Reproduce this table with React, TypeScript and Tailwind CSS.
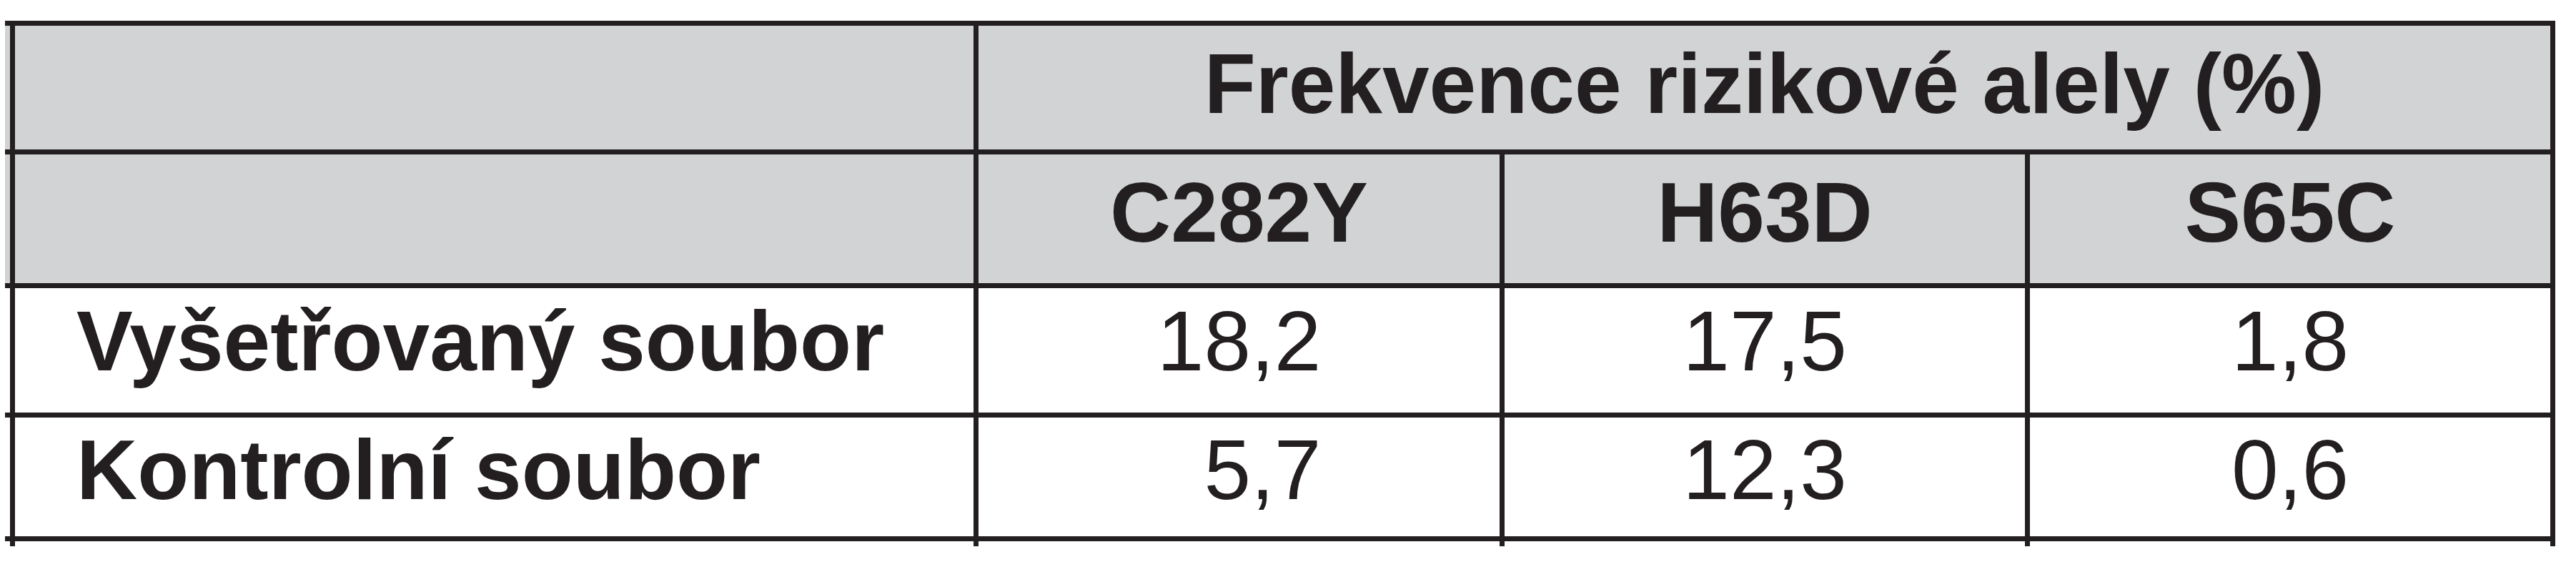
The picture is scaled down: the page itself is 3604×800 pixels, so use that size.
const line = "border-[#231f20]";

type Row = { label: string; values: [string, string, string] };

const rows: Row[] = [
  { label: "Vyšetřovaný soubor", values: ["18,2", "17,5", "1,8"] },
  { label: "Kontrolní soubor", values: ["5,7", "12,3", "0,6"] },
];

// width of the box each number sits in, so the commas line up
const numBox = ["w-[230px]", "w-[230px]", "w-[164px]"];

export default function App() {
  return (
    <div
      className="w-[3604px] h-[800px] bg-white pt-[29px] pl-[7px] text-[#231f20] text-[118px] leading-none"
      style={{ fontFamily: '"Liberation Sans", Arial, sans-serif' }}
    >
      <div className="w-[3568px]">
        {/* header row 1 */}
        <div className={"flex h-[180px] pl-[7px] bg-[#d1d3d4] border-t-[7px] " + line}>
          <div className={"w-[1348px] border-l-[7px] " + line} />
          <div className={"w-[2213px] border-l-[7px] border-r-[7px] flex justify-center pt-[22px] font-bold " + line}>
            Frekvence rizikové alely (%)
          </div>
        </div>

        {/* header row 2 */}
        <div className={"flex h-[187px] pl-[7px] bg-[#d1d3d4] border-t-[7px] " + line}>
          <div className={"w-[1348px] border-l-[7px] " + line} />
          <div className={"w-[736px] border-l-[7px] flex justify-center pt-[22px] font-bold " + line}>C282Y</div>
          <div className={"w-[735px] border-l-[7px] flex justify-center pt-[22px] font-bold " + line}>H63D</div>
          <div className={"w-[742px] border-l-[7px] border-r-[7px] flex justify-center pt-[22px] font-bold " + line}>
            S65C
          </div>
        </div>

        {rows.map((r, i) => (
          <div
            key={r.label}
            className={
              "flex pl-[7px] bg-white border-t-[7px] " +
              (i === 0 ? "h-[181px] " : "h-[180px] border-b-[7px] ") +
              line
            }
          >
            <div
              className={
                "w-[1348px] border-l-[7px] pl-[86px] font-bold " +
                (i === 0 ? "pt-[15px] " : "pt-[14px] ") +
                line
              }
            >
              {r.label}
            </div>
            {r.values.map((v, j) => (
              <div
                key={j}
                className={
                  "border-l-[7px] flex justify-center " +
                  (i === 0 ? "pt-[15px] " : "pt-[14px] ") +
                  (j === 0 ? "w-[736px] " : j === 1 ? "w-[735px] " : "w-[742px] border-r-[7px] ") +
                  line
                }
              >
                <div className={numBox[j] + " text-right"}>{v}</div>
              </div>
            ))}
          </div>
        ))}

        {/* little stubs where the vertical rules run past the bottom line */}
        <div className="flex h-[7px] pl-[7px]">
          <div className={"w-[1348px] border-l-[7px] " + line} />
          <div className={"w-[736px] border-l-[7px] " + line} />
          <div className={"w-[735px] border-l-[7px] " + line} />
          <div className={"w-[742px] border-l-[7px] border-r-[7px] " + line} />
        </div>
      </div>
    </div>
  );
}
